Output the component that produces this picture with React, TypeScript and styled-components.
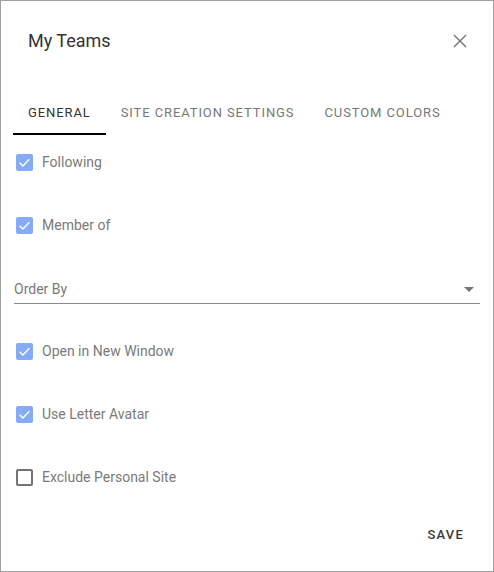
import React, { useState } from 'react';
import styled, { createGlobalStyle } from 'styled-components';

const GlobalStyle = createGlobalStyle`
    html, body {
        margin: 0;
        padding: 0;
        background: #ffffff;
    }
    * {
        box-sizing: border-box;
    }
`;

// --- Dialog frame ---

const Dialog = styled.div`
    width: 494px;
    height: 572px;
    border: 1px solid #a0a0a0;
    background: #ffffff;
    display: flex;
    flex-direction: column;
    font-family: Roboto, 'Liberation Sans', sans-serif;
`;

const Header = styled.header`
    display: flex;
    align-items: center;
    justify-content: space-between;
    height: 56px;
    margin-top: 12px;
    padding: 0 21px 0 27px;
`;

const Title = styled.h2`
    margin: 0 0 2px;
    font-size: 18px;
    font-weight: 400;
    color: #333333;
`;

const CloseButton = styled.button`
    width: 24px;
    height: 24px;
    padding: 0;
    border: none;
    background: transparent;
    color: #7a7a7a;
    display: flex;
    align-items: center;
    justify-content: center;
    cursor: pointer;
`;

// --- Tabs ---

const TabBar = styled.div`
    display: flex;
    margin-top: 21px;
    padding-left: 12px;
`;

const Tab = styled.button<{ active?: boolean }>`
    height: 45px;
    padding: 1px 15px 0;
    border: none;
    border-bottom: 2px solid ${p => (p.active ? '#000000' : 'transparent')};
    background: transparent;
    font-family: inherit;
    font-size: 13px;
    font-weight: 400;
    letter-spacing: 0.9px;
    color: ${p => (p.active ? '#333333' : '#777777')};
    cursor: pointer;
`;

// --- Form ---

const Form = styled.div`
    display: flex;
    flex-direction: column;
    gap: 7px;
    margin-top: -1px;
    padding: 0 13px;
`;

const Row = styled.label`
    display: flex;
    align-items: center;
    gap: 9px;
    height: 56px;
    padding-left: 2px;
    cursor: pointer;
`;

const Box = styled.span<{ checked: boolean }>`
    width: 17px;
    height: 17px;
    border-radius: 2px;
    display: flex;
    align-items: center;
    justify-content: center;
    background: ${p => (p.checked ? '#86abf6' : 'transparent')};
    border: 2px solid ${p => (p.checked ? '#86abf6' : '#737373')};
`;

const Label = styled.span`
    font-size: 14px;
    color: #7a7a7a;
`;

const Field = styled.div`
    height: 56px;
    display: flex;
    align-items: flex-end;
    padding-bottom: 12px;
`;

const Select = styled.div`
    flex: 1;
    height: 29px;
    display: flex;
    align-items: center;
    justify-content: space-between;
    border-bottom: 1px solid #8a8a8a;
    padding-right: 6px;
    font-size: 14px;
    color: #7a7a7a;
    cursor: pointer;
`;

const Caret = styled.span`
    width: 0;
    height: 0;
    border-left: 5px solid transparent;
    border-right: 5px solid transparent;
    border-top: 5px solid #757575;
`;

// --- Footer ---

const Footer = styled.footer`
    margin-top: auto;
    display: flex;
    justify-content: flex-end;
    padding: 0 14px 19px 0;
`;

const SaveButton = styled.button`
    height: 36px;
    padding: 0 15px;
    border: none;
    background: transparent;
    font-family: inherit;
    font-size: 13px;
    font-weight: 500;
    letter-spacing: 1.2px;
    color: #3a3a3a;
    cursor: pointer;
`;

const Check: React.FC<{ checked: boolean; label: string; onToggle: () => void }> = ({ checked, label, onToggle }) => (
    <Row onClick={onToggle}>
        <Box checked={checked}>
            {checked && (
                <svg width="13" height="13" viewBox="0 0 24 24">
                    <path d="M3 12.5l6 6L21 6" fill="none" stroke="#ffffff" strokeWidth="2.6" />
                </svg>
            )}
        </Box>
        <Label>{label}</Label>
    </Row>
);

const App: React.FC = () => {
    const [opts, setOpts] = useState({
        following: true,
        memberOf: true,
        newWindow: true,
        letterAvatar: true,
        excludePersonal: false,
    });

    const toggle = (key: keyof typeof opts) => setOpts(o => ({ ...o, [key]: !o[key] }));

    return (
        <>
            <GlobalStyle />
            <Dialog>
                <Header>
                    <Title>My Teams</Title>
                    <CloseButton aria-label="Close">
                        <svg width="14" height="14" viewBox="0 0 14 14">
                            <path d="M1 1L13 13M13 1L1 13" stroke="currentColor" strokeWidth="1.5" />
                        </svg>
                    </CloseButton>
                </Header>

                <TabBar>
                    <Tab active>GENERAL</Tab>
                    <Tab>SITE CREATION SETTINGS</Tab>
                    <Tab>CUSTOM COLORS</Tab>
                </TabBar>

                <Form>
                    <Check checked={opts.following} label="Following" onToggle={() => toggle('following')} />
                    <Check checked={opts.memberOf} label="Member of" onToggle={() => toggle('memberOf')} />
                    <Field>
                        <Select>
                            <span>Order By</span>
                            <Caret />
                        </Select>
                    </Field>
                    <Check checked={opts.newWindow} label="Open in New Window" onToggle={() => toggle('newWindow')} />
                    <Check checked={opts.letterAvatar} label="Use Letter Avatar" onToggle={() => toggle('letterAvatar')} />
                    <Check checked={opts.excludePersonal} label="Exclude Personal Site" onToggle={() => toggle('excludePersonal')} />
                </Form>

                <Footer>
                    <SaveButton>SAVE</SaveButton>
                </Footer>
            </Dialog>
        </>
    );
};

export default App;
